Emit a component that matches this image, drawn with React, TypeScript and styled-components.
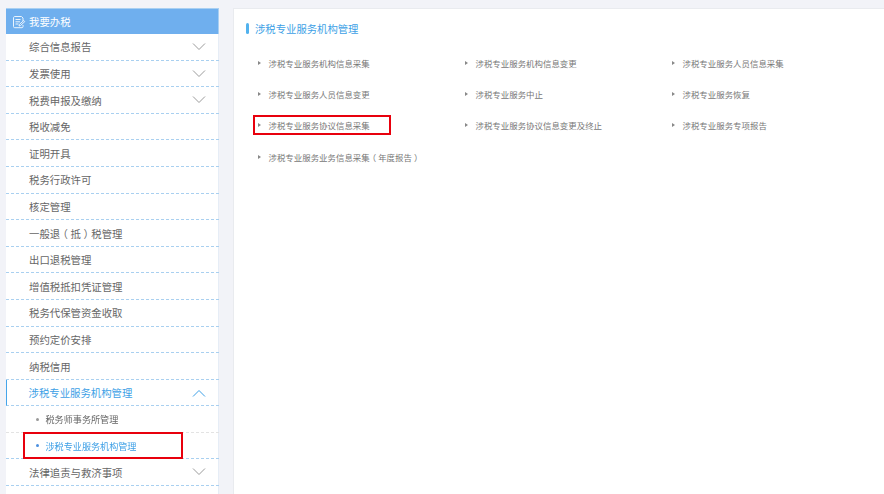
import React from "react";
import styled, { createGlobalStyle } from "styled-components";

const Global = createGlobalStyle`
  html, body { margin: 0; padding: 0; height: 100%; overflow: hidden; background: #f2f3f8; }
  * { box-sizing: border-box; }
  body { font-family: "Noto Sans CJK SC", "Liberation Sans", sans-serif; }
`;

const Page = styled.div`
  display: flex;
  align-items: flex-start;
  gap: 14px;
  width: 884px;
  height: 494px;
  padding: 8px 0 0 6px;
  overflow: hidden;
  filter: blur(0.35px);
`;

const Sidebar = styled.aside`
  flex: 0 0 213px;
  height: 486px;
  background: #fff;
  border-right: 1px solid #e6edf6;
`;

const SideHeader = styled.div`
  display: flex;
  align-items: center;
  gap: 3px;
  height: 26px;
  margin-right: -1px;
  padding-left: 6px;
  background: #6fafee;
  color: #fff;
  font-size: 10.4px;
  border: 1px solid #a8cff2;
  border-width: 1px 1px 0 0;
`;

const Row = styled.div<{ $active?: boolean }>`
  display: flex;
  align-items: center;
  justify-content: space-between;
  height: 26.6px;
  margin-right: -1px;
  padding: 0.4px 13px 0 ${(p) => (p.$active ? 21.5 : 23)}px;
  font-size: 10.4px;
  color: ${(p) => (p.$active ? "#3d9fe6" : "#666")};
  border-bottom: 1px dashed #a9d0f0;
  border-left: ${(p) => (p.$active ? "1.5px solid #45a5ea" : "0")};
`;

const Sub = styled.div<{ $active?: boolean }>`
  position: relative;
  display: flex;
  align-items: center;
  gap: 7px;
  height: 26.5px;
  margin-right: -1px;
  padding-left: 29.5px;
  font-size: 9.1px;
  color: ${(p) => (p.$active ? "#3d9fe6" : "#666")};
  border-bottom: 1px dashed ${(p) => (p.$active ? "#a9d0f0" : "#e3e3e3")};
`;

const Dot = styled.i<{ $active?: boolean }>`
  width: 3px;
  height: 3px;
  border-radius: 50%;
  background: ${(p) => (p.$active ? "#4b8fe0" : "#999")};
`;

const RedBox = styled.span`
  position: absolute;
  border: 2px solid #e8000d;
  pointer-events: none;
`;

const SideRed = styled(RedBox)`
  left: 17px;
  top: -1px;
  width: 160px;
  height: 27px;
`;

const Main = styled.main`
  flex: 0 0 651px;
  height: 486px;
  background: #fff;
  padding: 12px 0 0 13px;
  border: 1px solid #e9ebef;
  border-width: 1px 0 0 1px;
`;

const Title = styled.h2`
  display: flex;
  align-items: center;
  gap: 6px;
  height: 14px;
  margin: 0 0 12px -1px;
  font-size: 10.35px;
  font-weight: 400;
  color: #3d9fe6;
`;

const TitleBar = styled.i`
  width: 3px;
  height: 11px;
  border-radius: 2px;
  background: #52b2ee;
`;

const Grid = styled.div`
  display: grid;
  grid-template-columns: 207px 207px 207px;
  grid-auto-rows: 31.3px;
  padding-left: 11px;
`;

const Item = styled.div`
  position: relative;
  display: flex;
  align-items: center;
  gap: 7.5px;
  font-size: 8.45px;
  color: #777;
  white-space: nowrap;
`;

const Arrow = styled.i`
  width: 0;
  height: 0;
  border-left: 3px solid #888;
  border-top: 2px solid transparent;
  border-bottom: 2px solid transparent;
`;

const MainRed = styled(RedBox)`
  left: -5px;
  top: 5.5px;
  width: 138px;
  height: 20px;
`;

/* The reference font centres full-width brackets in their em box:
   set the bracket half-width and give it even space on both sides. */
const Paren = styled.span`
  font-feature-settings: "halt";
  margin: 0 0.25em;
`;

const Chevron = ({ up, color }: { up?: boolean; color: string }) => (
  <svg width="14" height="8" viewBox="0 0 14 8" fill="none" stroke={color} strokeWidth="1">
    <path d={up ? "M1 7.5 7 1.5 13 7.5" : "M1 .5 7 6.5 13 .5"} />
  </svg>
);

const DocIcon = () => (
  <svg width="14" height="14" viewBox="0 0 14 14" fill="none" stroke="#eaf4fd" strokeWidth="1">
    <path d="M3 1.5h6.5l1.5 1.5v3M3 1.5C2 1.5 1.5 2 1.5 3v8.5c0 .8.5 1.2 1.2 1.2h7.3c.6 0 1-.4 1-1V10" />
    <path d="M3.5 4.5h5M3.5 6.8h4.5M3.5 9h3" />
    <path d="M7 11l.4-1.6 4.4-3.9 1 1.1-4.3 3.9z" />
  </svg>
);

const topRows: { label: React.ReactNode; chevron?: boolean }[] = [
  { label: "综合信息报告", chevron: true },
  { label: "发票使用", chevron: true },
  { label: "税费申报及缴纳", chevron: true },
  { label: "税收减免" },
  { label: "证明开具" },
  { label: "税务行政许可" },
  { label: "核定管理" },
  { label: <span>一般退<Paren>（</Paren>抵<Paren>）</Paren>税管理</span> },
  { label: "出口退税管理" },
  { label: "增值税抵扣凭证管理" },
  { label: "税务代保管资金收取" },
  { label: "预约定价安排" },
  { label: "纳税信用" },
];

const items: React.ReactNode[] = [
  "涉税专业服务机构信息采集",
  "涉税专业服务机构信息变更",
  "涉税专业服务人员信息采集",
  "涉税专业服务人员信息变更",
  "涉税专业服务中止",
  "涉税专业服务恢复",
  "涉税专业服务协议信息采集",
  "涉税专业服务协议信息变更及终止",
  "涉税专业服务专项报告",
  <span>涉税专业服务业务信息采集<Paren>（</Paren>年度报告<Paren>）</Paren></span>,
];

export default function App() {
  return (
    <>
      <Global />
      <Page>
        <Sidebar>
          <SideHeader>
            <DocIcon />
            我要办税
          </SideHeader>
          {topRows.map((r, i) => (
            <Row key={i}>
              {r.label}
              {r.chevron && <Chevron color="#9a9a9a" />}
            </Row>
          ))}
          <Row $active>
            涉税专业服务机构管理
            <Chevron up color="#3d9fe6" />
          </Row>
          <Sub>
            <Dot />
            税务师事务所管理
          </Sub>
          <Sub $active>
            <Dot $active />
            涉税专业服务机构管理
            <SideRed />
          </Sub>
          <Row>
            法律追责与救济事项
            <Chevron color="#9a9a9a" />
          </Row>
        </Sidebar>
        <Main>
          <Title>
            <TitleBar />
            涉税专业服务机构管理
          </Title>
          <Grid>
            {items.map((t, i) => (
              <Item key={i}>
                <Arrow />
                {t}
                {i === 6 && <MainRed />}
              </Item>
            ))}
          </Grid>
        </Main>
      </Page>
    </>
  );
}
